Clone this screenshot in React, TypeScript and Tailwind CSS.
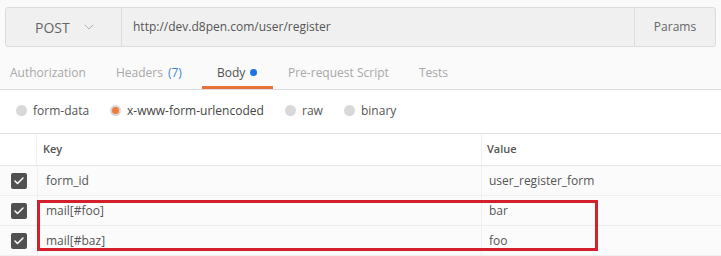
import { ChevronDown, Check } from 'lucide-react'

const tabs = [
  { label: 'Authorization', w: 'w-[106px]' },
  { label: 'Headers', w: 'w-[101px]', count: '(7)' },
  { label: 'Body', w: 'w-[71px]', active: true },
  { label: 'Pre-request Script', w: 'w-[131px]' },
  { label: 'Tests', w: 'w-[60px]' },
]

const modes = [
  { label: 'form-data', w: 'w-[94px]' },
  { label: 'x-www-form-urlencoded', w: 'w-[175px]', checked: true },
  { label: 'raw', w: 'w-[59px]' },
  { label: 'binary', w: 'w-[70px]' },
]

const rows = [
  { key: 'form_id', value: 'user_register_form' },
  { key: 'mail[#foo]', value: 'bar' },
  { key: 'mail[#baz]', value: 'foo' },
]

function Radio({ checked }: { checked?: boolean }) {
  return (
    <span className="w-[11px] h-[11px] rounded-full bg-[#d8d8d8] flex items-center justify-center shrink-0">
      {checked && <span className="w-[7px] h-[7px] rounded-full bg-[#ef7d3c]" />}
    </span>
  )
}

export default function App() {
  return (
    <div className="w-[721px] h-[256px] overflow-hidden bg-[#fafafa] text-[12px] text-[#555]" style={{ fontFamily: '"Open Sans", "Liberation Sans", sans-serif' }}>
      <div className="pt-[7px] pl-[5px]">
        <div className="w-[711px] h-[40px] flex border border-[#dcdcdc] rounded-[3px] bg-[#f0f0f0]">
          <div className="w-[116px] flex items-center pl-[29px] border-r border-[#dcdcdc]">
            <span className="text-[14px] text-[#666]">POST</span>
            <ChevronDown className="ml-[11px] text-[#aaa]" size={16} strokeWidth={1.3} />
          </div>
          <div className="flex-1 flex items-center pl-[11px] text-[#555]">http://dev.d8pen.com/user/register</div>
          <div className="w-[81px] flex items-center justify-center border-l border-[#dcdcdc] text-[#666]">Params</div>
        </div>
      </div>

      <div className="h-[43px] flex border-b border-[#dcdcdc]">
        <div className="w-[10px]" />
        {tabs.map(t => (
          <div key={t.label} className={`${t.w} relative flex items-center pt-[9px] ${t.active ? 'text-[#505050]' : 'text-[#a8a8a8]'}`}>
            <span>{t.label}</span>
            {t.count && <span className="ml-[5px] text-[#3a86d6]">{t.count}</span>}
            {t.active && <span className="ml-[5px] w-[7px] h-[7px] rounded-full bg-[#1a74e6]" />}
            {t.active && <span className="absolute left-[-15px] bottom-0 w-[71px] h-[3px] bg-[#e6733a]" />}
          </div>
        ))}
      </div>

      <div className="h-[43px] flex items-center pl-[16px] pb-[2px] bg-white">
        {modes.map(m => (
          <div key={m.label} className={`${m.w} flex items-center gap-[6px] ${m.checked ? 'text-[#444]' : 'text-[#555]'}`}>
            <Radio checked={m.checked} />
            <span>{m.label}</span>
          </div>
        ))}
      </div>

      <div className="border-t border-[#e0e0e0] bg-white">
        <div className="h-[32px] flex border-b border-[#e6e6e6] text-[11px] font-semibold text-[#555]">
          <div className="w-[37px] border-r border-[#f0f0f0]" />
          <div className="w-[445px] flex items-center pl-[6px] border-r border-[#f0f0f0]">Key</div>
          <div className="flex-1 flex items-center pl-[5px]">Value</div>
        </div>
        <div className="relative">
          {rows.map(r => (
            <div key={r.key} className="h-[30px] flex border-b border-[#eeeeee] bg-[#fbfbfb]">
              <div className="w-[37px] flex items-center justify-center pl-[11px] pr-[10px]">
                <span className="w-[16px] h-[16px] rounded-[2px] bg-[#505050] flex items-center justify-center">
                  <Check size={12} strokeWidth={3} className="text-white" />
                </span>
              </div>
              <div className="w-[445px] flex items-center pl-[8px] border-x border-[#f0f0f0]">{r.key}</div>
              <div className="flex-1 flex items-center pl-[7px]">{r.value}</div>
            </div>
          ))}
          <div className="absolute left-[37px] top-[34px] w-[561px] h-[51px] border-[3px] border-[#d4202c]" />
        </div>
      </div>
    </div>
  )
}
